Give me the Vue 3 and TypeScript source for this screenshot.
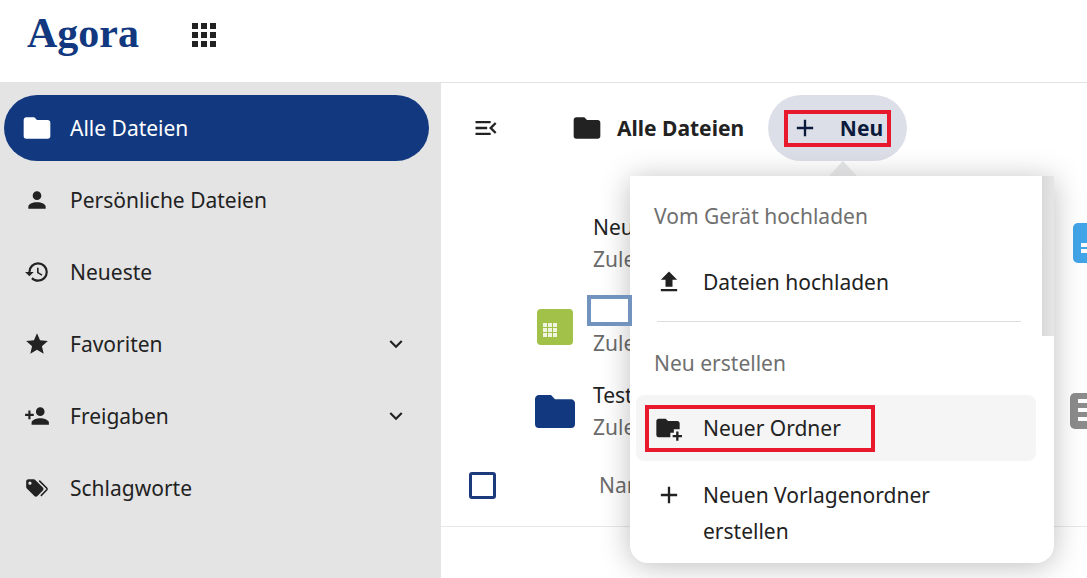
<script setup lang="ts">
const P = {
  folder: 'M10,4H4C2.89,4 2,4.89 2,6V18A2,2 0 0,0 4,20H20A2,2 0 0,0 22,18V8C22,6.89 21.1,6 20,6H12L10,4Z',
  account: 'M12,4A4,4 0 0,1 16,8A4,4 0 0,1 12,12A4,4 0 0,1 8,8A4,4 0 0,1 12,4M12,14C16.42,14 20,15.79 20,18V20H4V18C4,15.79 7.58,14 12,14Z',
  history: 'M13.5,8H12V13L16.28,15.54L17,14.33L13.5,12.25V8M13,3A9,9 0 0,0 4,12H1L4.96,16.03L9,12H6A7,7 0 0,1 13,5A7,7 0 0,1 20,12A7,7 0 0,1 13,19C11.07,19 9.32,18.21 8.06,16.94L6.64,18.36C8.27,20 10.5,21 13,21A9,9 0 0,0 22,12A9,9 0 0,0 13,3',
  star: 'M12,17.27L18.18,21L16.54,13.97L22,9.24L14.81,8.62L12,2L9.19,8.62L2,9.24L7.45,13.97L5.82,21L12,17.27Z',
  share: 'M15,14C12.33,14 7,15.33 7,18V20H23V18C23,15.33 17.67,14 15,14M6,10V7H4V10H1V12H4V15H6V12H9V10M15,12A4,4 0 0,0 19,8A4,4 0 0,0 15,4A4,4 0 0,0 11,8A4,4 0 0,0 15,12Z',
  tags: 'M5.5,9A1.5,1.5 0 0,0 7,7.5A1.5,1.5 0 0,0 5.5,6A1.5,1.5 0 0,0 4,7.5A1.5,1.5 0 0,0 5.5,9M17.41,11.58C17.77,11.94 18,12.44 18,13C18,13.55 17.78,14.05 17.41,14.41L12.41,19.41C12.05,19.77 11.55,20 11,20C10.45,20 9.95,19.78 9.58,19.41L2.59,12.42C2.22,12.05 2,11.55 2,11V6C2,4.89 2.89,4 4,4H9C9.55,4 10.05,4.22 10.41,4.58L17.41,11.58M13.54,5.71L14.54,4.71L21.41,11.58C21.78,11.94 22,12.45 22,13C22,13.55 21.78,14.05 21.42,14.41L16.04,19.79L15.04,18.79L20.75,13L13.54,5.71Z',
  chevron: 'M7.41,8.58L12,13.17L16.59,8.58L18,10L12,16L6,10L7.41,8.58Z',
  upload: 'M9,16V10H5L12,3L19,10H15V16H9M5,20V18H19V20H5Z',
  plus: 'M19,13H13V19H11V13H5V11H11V5H13V11H19V13Z',
  toggle: 'M21,15.61L19.59,17L14.58,12L19.59,7L21,8.39L17.44,12L21,15.61M3,6H16V8H3V6M3,13V11H13V13H3M3,18V16H16V18H3Z',
  folderPlus: 'M10,4H4C2.89,4 2,4.89 2,6V18A2,2 0 0,0 4,20H14V16H17V13H22V8C22,6.89 21.1,6 20,6H12L10,4Z M19,15V18H16V20H19V23H21V20H24V18H21V15H19Z'
}
const nav = [
  { label: 'Alle Dateien', icon: P.folder, active: true },
  { label: 'Persönliche Dateien', icon: P.account },
  { label: 'Neueste', icon: P.history },
  { label: 'Favoriten', icon: P.star, more: true },
  { label: 'Freigaben', icon: P.share, more: true },
  { label: 'Schlagworte', icon: P.tags }
]
</script>

<template>
  <div class="page">
    <header class="top">
      <span class="logo">Agora</span>
      <div class="apps"><i v-for="n in 9" :key="n"></i></div>
    </header>
    <div class="body">
      <aside class="side">
        <a v-for="item in nav" :key="item.label" class="nav" :class="{ active: item.active }">
          <svg class="nav-ic" viewBox="0 0 24 24"><path :d="item.icon" /></svg>
          <span class="nav-label">{{ item.label }}</span>
          <svg v-if="item.more" class="chev" viewBox="0 0 24 24"><path :d="P.chevron" /></svg>
        </a>
      </aside>
      <main class="main">
        <div class="bar">
          <svg class="toggle" viewBox="0 0 24 24"><path :d="P.toggle" /></svg>
          <svg class="crumb-ic" viewBox="0 0 24 24"><path :d="P.folder" /></svg>
          <strong class="crumb">Alle Dateien</strong>
          <div class="new">
            <div class="new-mark">
              <svg viewBox="0 0 24 24"><path :d="P.plus" /></svg>
              <b>Neu</b>
            </div>
          </div>
        </div>

        <div class="recent">
          <div class="row">
            <div class="slot"></div>
            <div class="txt"><div class="t1">Neue Datei</div><div class="t2">Zuletzt bearbeitet</div></div>
            <div class="tile blue"><i></i><i></i></div>
          </div>
          <div class="row">
            <div class="slot"><div class="sheet"><i v-for="n in 9" :key="n"></i></div></div>
            <div class="txt"><div class="rename"></div><div class="t2">Zuletzt bearbeitet</div></div>
          </div>
          <div class="row">
            <div class="slot"><svg class="big-folder" viewBox="2 4 20 16" preserveAspectRatio="none"><path :d="P.folder" /></svg></div>
            <div class="txt"><div class="t1">Test</div><div class="t2">Zuletzt bearbeitet</div></div>
            <div class="tile gray"><i></i><i></i><i></i></div>
          </div>
        </div>

        <div class="head">
          <span class="check"></span>
          <span class="name">Name</span>
        </div>

        <div class="arrow"></div>
        <div class="menu">
          <div class="strip"></div>
          <div class="cap first">Vom Gerät hochladen</div>
          <div class="item upload">
            <svg viewBox="0 0 24 24"><path :d="P.upload" /></svg>
            <span>Dateien hochladen</span>
          </div>
          <div class="sep"></div>
          <div class="cap">Neu erstellen</div>
          <div class="item hover">
            <div class="mark"></div>
            <svg class="fp" viewBox="0 0 24 24"><path fill-rule="evenodd" :d="P.folderPlus" /></svg>
            <span>Neuer Ordner</span>
          </div>
          <div class="item tall">
            <svg viewBox="0 0 24 24"><path :d="P.plus" /></svg>
            <span>Neuen Vorlagenordner erstellen</span>
          </div>
        </div>
      </main>
    </div>
  </div>
</template>

<style>
html, body { margin: 0; background: #fff; overflow: hidden; }
</style>

<style scoped>
.page { width: 1087px; height: 578px; overflow: hidden; font-family: "Noto Sans", "Open Sans", sans-serif; color: #222; font-size: 21px; display: flex; flex-direction: column; }
.top { height: 82px; flex: none; display: flex; align-items: flex-start; border-bottom: 1px solid #e2e2e0; box-sizing: content-box; }
.logo { font: 700 42px/1 "Liberation Serif", serif; color: #12397f; margin: 12px 0 0 27px; width: 165px; }
.apps { margin-top: 23px; display: grid; grid-template-columns: repeat(3, 6px); gap: 3px; }
.apps i { height: 6px; background: #222; }
.body { flex: 1; display: flex; min-height: 0; }
.side { width: 441px; flex: none; background: #e4e4e4; padding: 12px 12px 0 4px; box-sizing: border-box; display: flex; flex-direction: column; gap: 6px; }
.nav { height: 66px; border-radius: 33px; display: flex; align-items: center; padding-left: 20px; flex: none; }
.nav.active { background: #12397f; color: #fff; }
.nav-ic { width: 26px; height: 26px; fill: currentColor; margin-right: 20px; flex: none; }
.nav.active .nav-ic { width: 32px; height: 32px; margin: 0 17px 0 -3px; }
.nav-label { flex: 1; }
.chev { width: 26px; height: 26px; fill: #222; margin-right: 20px; }
.main { flex: 1; position: relative; overflow: hidden; min-width: 0; }
.bar { display: flex; align-items: center; margin-top: 12px; height: 66px; padding-left: 31px; }
.toggle { width: 28px; height: 28px; fill: #222; flex: none; }
.crumb-ic { width: 32px; height: 32px; fill: #222; margin-left: 71px; flex: none; }
.crumb { font-size: 21px; font-weight: 700; margin-left: 14px; color: #222; }
.new { margin-left: 24px; width: 139px; height: 66px; border-radius: 33px; background: #dcdfe7; display: flex; align-items: center; justify-content: center; }
.new-mark { width: 107px; height: 37px; box-sizing: border-box; border: 4px solid #e8192c; display: flex; align-items: center; justify-content: space-between; padding: 0 4px 0 3px; color: #0b1a3c; }
.new-mark svg { width: 28px; height: 28px; fill: #0b1a3c; }
.new-mark b { font-size: 21px; }
.recent { margin-top: 40px; padding-left: 94px; }
.row { height: 84px; display: flex; align-items: center; }
.slot { width: 40px; margin-right: 18px; flex: none; display: flex; justify-content: center; }
.txt { flex: 1; min-width: 0; white-space: nowrap; }
.t1 { line-height: 32px; height: 32px; color: #222; }
.t2 { line-height: 32px; height: 32px; color: #6b6b6b; }
.rename { width: 45px; height: 31px; box-sizing: border-box; border: 4px solid #7393bf; background: #fff; margin: 0 0 1px -6px; position: relative; z-index: 3; }
.sheet { width: 36px; height: 36px; border-radius: 4px; background: #a1c149; display: grid; grid-template-columns: repeat(3, 4px); grid-auto-rows: 4px; gap: 1px; padding: 14px 0 0 6px; box-sizing: border-box; }
.sheet i { background: #f0f4e0; }
.big-folder { width: 40px; height: 33px; fill: #12397f; display: block; }
.tile { flex: none; display: flex; flex-direction: column; justify-content: center; gap: 2px; border-radius: 5px 0 0 5px; }
.tile i { display: block; background: #fff; height: 4px; }
.blue { width: 14px; height: 40px; background: #42a5e8; padding: 20px 0 0 8px; box-sizing: border-box; justify-content: flex-start; }
.gray { width: 17px; height: 36px; background: #8c8c8c; padding: 6px 0 0 8px; box-sizing: border-box; justify-content: flex-start; gap: 5px; }
.head { margin-top: 7px; height: 66px; padding-left: 28px; display: flex; align-items: center; border-bottom: 1px solid #e8e8e8; }
.check { width: 27px; height: 27px; box-sizing: border-box; border: 3px solid #1c3a7c; border-radius: 3px; margin-top: -16px; flex: none; }
.name { margin: -16px 0 0 103px; color: #6b6b6b; }
.arrow { position: absolute; left: 387px; top: 78px; width: 30px; height: 16px; background: linear-gradient(#e2e3e6, #f3f3f3); clip-path: polygon(50% 0, 100% 100%, 0 100%); z-index: 2; }
.menu { position: absolute; left: 189px; top: 93px; width: 424px; height: 387px; box-sizing: border-box; background: #fff; border-radius: 0 0 18px 18px; box-shadow: 0 3px 30px rgba(0, 0, 0, .26); z-index: 2; padding: 0 6px; display: flex; flex-direction: column; }
.strip { position: absolute; right: 0; top: 0; width: 12px; height: 160px; background: linear-gradient(90deg, #d9d9d9, #e6e6e6); }
.cap { color: #6f6f6f; padding-left: 18px; line-height: 32px; }
.cap.first { margin-top: 24px; }
.item { position: relative; display: flex; align-items: center; }
.item svg { width: 28px; height: 28px; fill: #222; flex: none; position: absolute; left: 19px; }
.item span { padding-left: 67px; }
.upload { height: 66px; margin-top: 17px; }
.sep { height: 1px; background: #dcdcdc; margin: 6px 27px 0 21px; flex: none; width: 364px; }
.cap:not(.first) { margin-top: 25px; }
.hover { height: 66px; background: #f5f5f5; border-radius: 8px; margin: 16px 12px 0 0; }
.mark { position: absolute; left: 9px; top: 10px; width: 230px; height: 47px; box-sizing: border-box; border: 4px solid #e8192c; }
.item .fp { left: 18px; }
.tall { margin: 16px 12px 0 0; height: 72px; line-height: 36px; }
.tall svg { top: 4px; }
.tall span { max-width: 300px; }
</style>
